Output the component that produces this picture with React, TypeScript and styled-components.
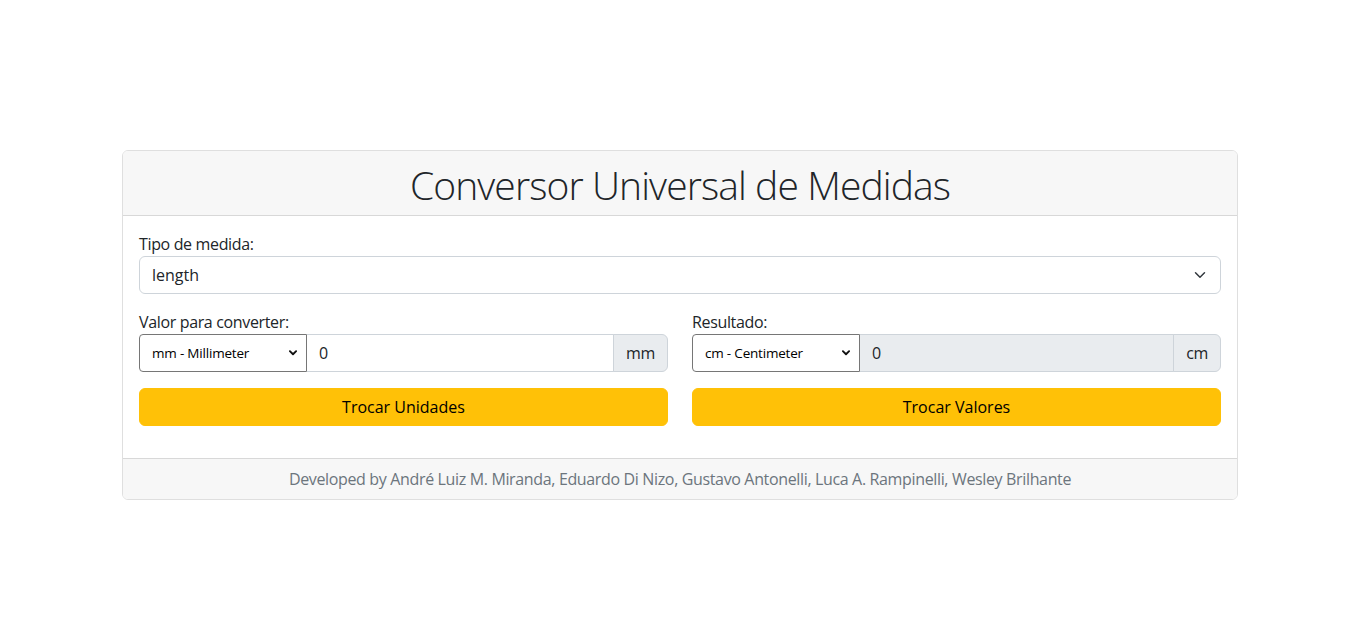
import React from "react";
import styled, { createGlobalStyle } from "styled-components";

const Global = createGlobalStyle`
  * { box-sizing: border-box; }
  body {
    margin: 0;
    font-family: "Open Sans", "Noto Sans", sans-serif;
    font-size: 16px;
    line-height: 1.5;
    letter-spacing: -0.35px;
    color: #212529;
    background: #fff;
  }
`;

const chevron = `url("data:image/svg+xml,%3csvg xmlns='http://www.w3.org/2000/svg' viewBox='0 0 16 16'%3e%3cpath fill='none' stroke='%23343a40' stroke-linecap='round' stroke-linejoin='round' stroke-width='2' d='m2 5 6 6 6-6'/%3e%3c/svg%3e")`;
const smallChevron = `url("data:image/svg+xml,%3csvg xmlns='http://www.w3.org/2000/svg' viewBox='0 0 16 16'%3e%3cpath fill='none' stroke='%23111' stroke-linecap='round' stroke-linejoin='round' stroke-width='3' d='m3 5 5 5 5-5'/%3e%3c/svg%3e")`;

const Page = styled.div`
  padding-top: 150px;
  display: flex;
  justify-content: center;
`;

const Container = styled.div`
  width: 1140px;
  padding: 0 12px;
`;

const Card = styled.div`
  border: 1px solid rgba(0, 0, 0, 0.125);
  border-radius: 6px;
  overflow: hidden;
`;

const CardHeader = styled.div`
  background: #f7f7f7;
  border-bottom: 1px solid rgba(0, 0, 0, 0.125);
  padding: 10px 16px 6px;
  text-align: center;
`;

const Title = styled.h1`
  margin: 0;
  font-size: 39px;
  font-weight: 300;
  line-height: 48px;
  letter-spacing: -0.9px;
`;

const CardBody = styled.div`
  padding: 16px 16px 32px;
`;

const Label = styled.label`
  display: block;
`;

const MainSelect = styled.select`
  display: block;
  width: 100%;
  height: 38px;
  padding: 6px 36px 6px 12px;
  font: inherit;
  color: #212529;
  background: #fff ${chevron} no-repeat right 12px center / 16px 12px;
  border: 1px solid #ced4da;
  border-radius: 6px;
  appearance: none;
`;

const Row = styled.div`
  display: grid;
  grid-template-columns: 1fr 1fr;
  column-gap: 24px;
  margin-top: 16px;
`;

const Col = styled.div`
  display: flex;
  flex-direction: column;
`;

const InputGroup = styled.div`
  display: flex;
  height: 38px;
`;

const UnitSelect = styled.select`
  width: 168px;
  flex: none;
  padding: 0 20px 0 12px;
  font-family: inherit;
  font-size: 13.5px;
  letter-spacing: -0.2px;
  color: #000;
  background: #fff ${smallChevron} no-repeat right 8px center / 10px 10px;
  border: 1px solid #767676;
  border-radius: 4px 0 0 4px;
  appearance: none;
`;

const Input = styled.input<{ $disabled?: boolean }>`
  flex: 1;
  min-width: 0;
  padding: 6px 12px;
  font: inherit;
  color: #212529;
  background: ${(p) => (p.$disabled ? "#e9ecef" : "#fff")};
  border: 1px solid #ced4da;
  border-left: none;
  outline: none;
`;

const Addon = styled.span`
  display: flex;
  align-items: center;
  padding: 6px 12px;
  background: #e9ecef;
  border: 1px solid #ced4da;
  margin-left: -1px;
  border-radius: 0 6px 6px 0;
  white-space: nowrap;
`;

const Button = styled.button`
  margin-top: 16px;
  height: 38px;
  font: inherit;
  color: #000;
  background: #ffc107;
  border: 1px solid #ffc107;
  border-radius: 6px;
  cursor: pointer;
`;

const CardFooter = styled.div`
  background: #f7f7f7;
  border-top: 1px solid rgba(0, 0, 0, 0.125);
  padding: 8px 16px;
  text-align: center;
  color: #6c757d;
`;

export default function App() {
  return (
    <>
      <Global />
      <Page>
        <Container>
          <Card>
            <CardHeader>
              <Title>Conversor Universal de Medidas</Title>
            </CardHeader>
            <CardBody>
              <Label htmlFor="tipo">Tipo de medida:</Label>
              <MainSelect id="tipo" defaultValue="length">
                <option value="length">length</option>
              </MainSelect>
              <Row>
                <Col>
                  <Label>Valor para converter:</Label>
                  <InputGroup>
                    <UnitSelect defaultValue="mm">
                      <option value="mm">mm - Millimeter</option>
                    </UnitSelect>
                    <Input defaultValue="0" />
                    <Addon>mm</Addon>
                  </InputGroup>
                  <Button>Trocar Unidades</Button>
                </Col>
                <Col>
                  <Label>Resultado:</Label>
                  <InputGroup>
                    <UnitSelect defaultValue="cm">
                      <option value="cm">cm - Centimeter</option>
                    </UnitSelect>
                    <Input $disabled readOnly value="0" />
                    <Addon>cm</Addon>
                  </InputGroup>
                  <Button>Trocar Valores</Button>
                </Col>
              </Row>
            </CardBody>
            <CardFooter>
              Developed by André Luiz M. Miranda, Eduardo Di Nizo, Gustavo Antonelli, Luca A. Rampinelli, Wesley Brilhante
            </CardFooter>
          </Card>
        </Container>
      </Page>
    </>
  );
}
